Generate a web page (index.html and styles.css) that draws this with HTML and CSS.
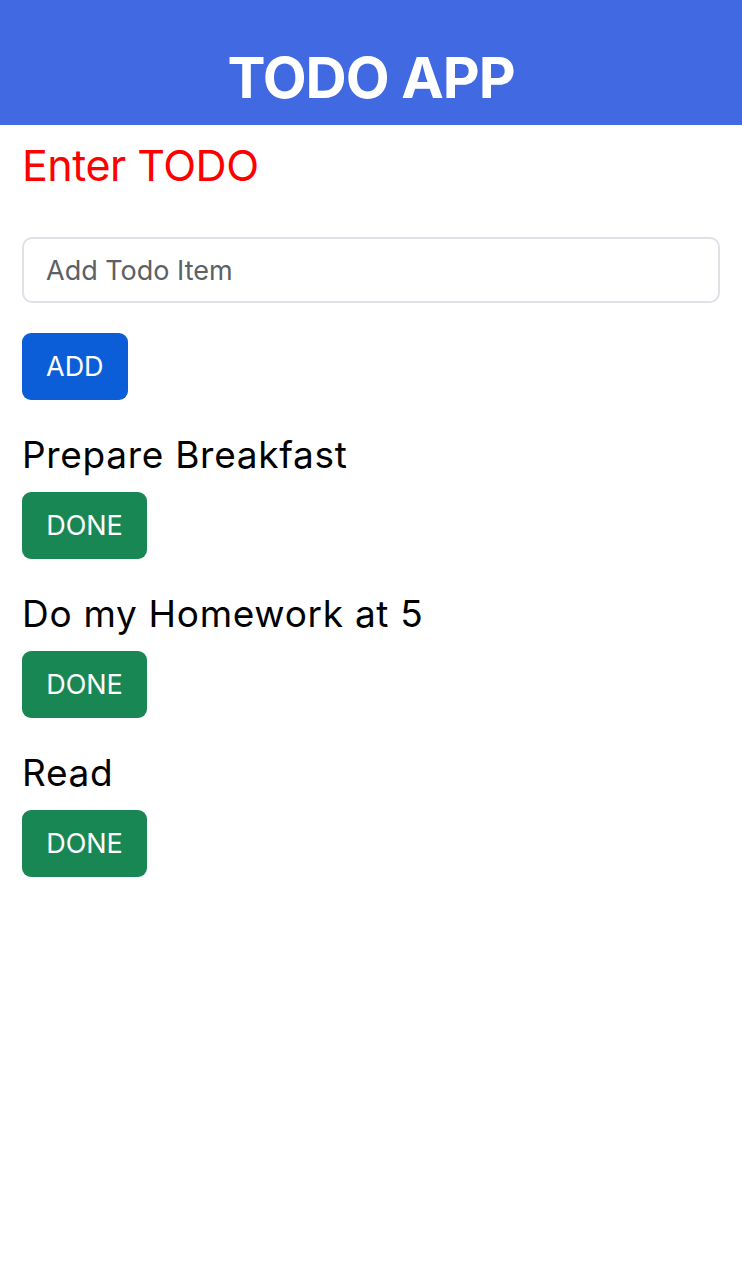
FILE: index.html
```html
<!DOCTYPE html>
<html lang="en">
<head>
<meta charset="utf-8">
<title>TODO APP</title>
<link rel="stylesheet" href="styles.css">
</head>
<body>
<header class="app-header">
  <h1 class="app-title">TODO APP</h1>
</header>
<main class="content">
  <h2 class="enter-title">Enter TODO</h2>
  <input class="todo-input" type="text" placeholder="Add Todo Item">
  <button class="btn btn-add">ADD</button>
  <ul class="todo-list">
    <li class="todo-item">
      <p class="todo-text">Prepare Breakfast</p>
      <button class="btn btn-done">DONE</button>
    </li>
    <li class="todo-item">
      <p class="todo-text">Do my Homework at 5</p>
      <button class="btn btn-done">DONE</button>
    </li>
    <li class="todo-item">
      <p class="todo-text">Read</p>
      <button class="btn btn-done">DONE</button>
    </li>
  </ul>
</main>
</body>
</html>
```

FILE: styles.css
```css
* { box-sizing: border-box; }
html, body {
  margin: 0;
  padding: 0;
  background: #ffffff;
  font-family: Inter, "Noto Sans", "Liberation Sans", sans-serif;
}
.app-header {
  background: #4169e1;
  height: 125px;
  padding-top: 49px;
  text-align: center;
}
.app-title {
  margin: 0;
  color: #ffffff;
  font-size: 57px;
  font-weight: 700;
  line-height: 1;
  letter-spacing: -1px;
}
.content {
  padding: 0 22px;
}
.enter-title {
  margin: 14px 0 0;
  color: #ff0000;
  font-size: 43px;
  font-weight: 400;
  line-height: 52px;
  letter-spacing: -0.5px;
}
.todo-input {
  display: block;
  width: 100%;
  height: 66px;
  margin-top: 46px;
  padding: 0 22px;
  border: 2px solid #dee2e6;
  border-radius: 10px;
  font-family: inherit;
  font-size: 27px;
  color: #212529;
  background: #fff;
  outline: none;
}
.todo-input::placeholder {
  color: #5c6166;
}
.btn {
  display: block;
  height: 67px;
  padding: 0 24px;
  border: none;
  border-radius: 9px;
  color: #ffffff;
  font-family: inherit;
  font-size: 27px;
  font-weight: 400;
}
.btn-add {
  margin-top: 30px;
  background: #0b5ed7;
}
.todo-list {
  list-style: none;
  margin: 0;
  padding: 0;
}
.todo-text {
  margin: 33px 0 0;
  font-size: 37px;
  line-height: 44px;
  letter-spacing: 0.7px;
  color: #000;
}
.btn-done {
  margin-top: 15px;
  background: #198754;
  width: 125px;
}
```
